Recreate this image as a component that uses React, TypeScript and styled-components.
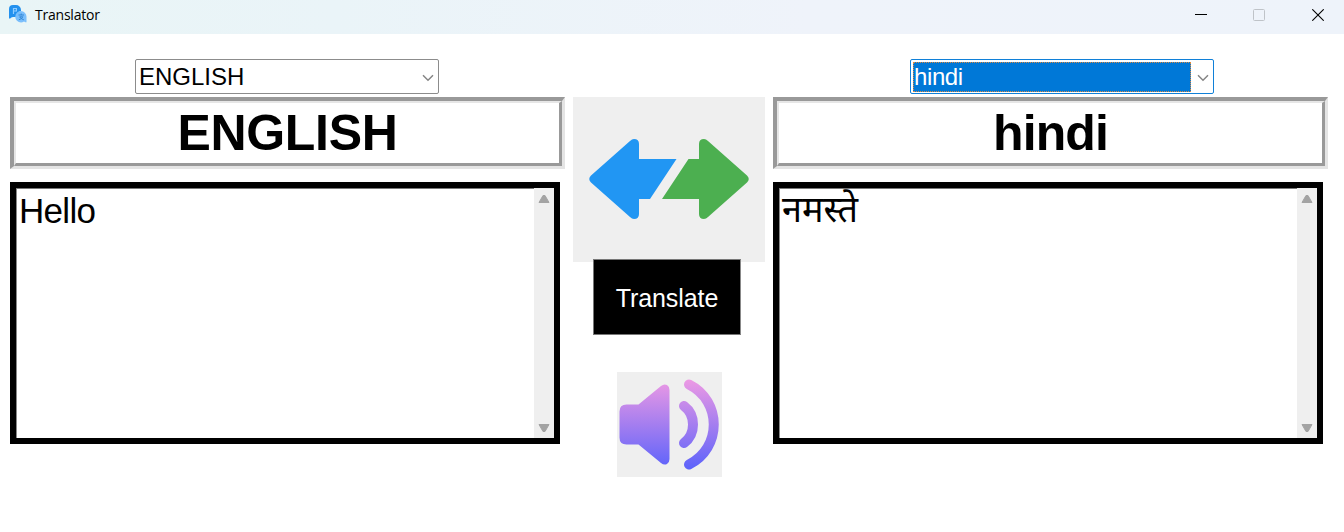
import React from "react";
import styled, { createGlobalStyle } from "styled-components";

const GlobalStyle = createGlobalStyle`
  * { box-sizing: border-box; }
  body { margin: 0; background: #fff; overflow: hidden; }
`;

const sans = `"Liberation Sans", "Noto Sans", "Noto Sans Devanagari", sans-serif`;

const Window = styled.div`
  width: 1344px;
  height: 532px;
  display: flex;
  flex-direction: column;
  background: #fff;
  color: #000;
  font-family: ${sans};
`;

const TitleBar = styled.header`
  height: 34px;
  flex: none;
  display: flex;
  align-items: center;
  background: linear-gradient(90deg, #e9f5f6 0%, #eaf4f8 25%, #eff3fa 60%, #eef3fa 100%);
  padding-left: 8px;
`;

const Title = styled.span`
  margin: -4px auto 0 7px;
  font: 14px/20px "Open Sans", sans-serif;
  letter-spacing: -0.22px;
`;

const WindowControls = styled.div`
  display: flex;
  margin: 0 -3px 4px 0;
`;

const WindowButton = styled.button`
  width: 58.5px;
  height: 30px;
  padding: 0;
  border: 0;
  background: none;
  display: grid;
  place-items: center;
`;

const Main = styled.main`
  display: grid;
  grid-template-columns: 555px 192px 555px;
  column-gap: 8px;
  padding: 25px 0 0 10px;
`;

const Panel = styled.section`
  display: flex;
  flex-direction: column;
`;

const Combo = styled.div<{ $active?: boolean; $offset: number }>`
  width: 304px;
  height: 35px;
  margin-left: ${(p) => p.$offset}px;
  display: flex;
  align-items: center;
  border: 1px solid ${(p) => (p.$active ? "#1080d8" : "#8c8c8c")};
  border-radius: 2px;
  padding: 2px 3px 2px 1.5px;
`;

const ComboValue = styled.span<{ $active?: boolean }>`
  flex: 1;
  height: 30px;
  padding-left: 1.5px;
  font-size: 24px;
  line-height: 29px;
  letter-spacing: ${(p) => (p.$active ? "-0.4px" : "0")};
  color: ${(p) => (p.$active ? "#fff" : "#000")};
  background: ${(p) => (p.$active ? "#0078d7" : "transparent")};
  outline: ${(p) => (p.$active ? "1px dotted #d98b45" : "none")};
  outline-offset: -1px;
`;

const ComboArrow = styled.svg`
  width: 12px;
  height: 8px;
  margin: 3px 1px 0 6px;
`;

const LabelOuter = styled.div`
  height: 72px;
  margin-top: 2.5px;
  border-style: solid;
  border-width: 4px 3px 3px 4px;
  border-color: #999 #e4e4e4 #e4e4e4 #999;
`;

const LabelInner = styled.div<{ $tight?: boolean }>`
  height: 100%;
  border-style: solid;
  border-width: 2px 3px 3px 2px;
  border-color: #e6e6e6 #999 #999 #e6e6e6;
  font-weight: 700;
  font-size: 50px;
  line-height: 61px;
  letter-spacing: ${(p) => (p.$tight ? "-0.9px" : "-0.3px")};
  text-align: center;
`;

const TextBox = styled.div`
  width: 550px;
  height: 262.5px;
  margin-top: 13px;
  border: 6px solid #000;
  display: flex;
`;

const TextContent = styled.div<{ $latin?: boolean }>`
  flex: 1;
  border-top: 1px solid #777;
  border-left: 1px solid #888;
  padding: ${(p) => (p.$latin ? "1px" : "0")} 0 0 2px;
  font-size: ${(p) => (p.$latin ? "35px" : "36px")};
  line-height: 41px;
  letter-spacing: ${(p) => (p.$latin ? "-0.7px" : "0")};
`;

const ScrollBar = styled.div`
  width: 20px;
  background: #efefef;
  display: flex;
  flex-direction: column;
  justify-content: space-between;
  align-items: center;
  padding: 6px 0 5px;
`;

const Actions = styled.div`
  display: flex;
  flex-direction: column;
  align-items: center;
  padding-top: 37.5px;
`;

const SwapArea = styled.div`
  width: 192px;
  height: 165px;
  flex: none;
  display: grid;
  place-items: center;
  background: #efefef;
`;

const TranslateButton = styled.button`
  width: 148px;
  height: 76px;
  flex: none;
  margin: -2.5px 4px 0 0;
  border: 1px solid #777;
  border-right-color: #888;
  background: #000;
  color: #fff;
  font-family: ${sans};
  font-size: 25px;
  letter-spacing: -0.1px;
  padding: 2px 0 0;
`;

const SpeakButton = styled.button`
  width: 105px;
  height: 105px;
  flex: none;
  margin-top: 36.5px;
  padding: 0;
  border: 0;
  background: #efefef;
`;

const Drawing = styled.svg`
  display: block;
`;

const AppMark = styled(Drawing)`
  margin-bottom: 6px;
`;

function ScrollTriangle({ down }: { down?: boolean }) {
  return (
    <Drawing width="12" height="10" viewBox="0 0 12 10">
      <path
        d={down ? "M1 1.5H11L7 8.500H5Z" : "M5 1.500H7L11 8.500H1Z"}
        fill="#a3a3a3"
        stroke="#a3a3a3"
        strokeLinejoin="round"
      />
    </Drawing>
  );
}

interface LanguagePanelProps {
  name: string;
  text: string;
  active?: boolean;
  latin?: boolean;
  offset: number;
}

function LanguagePanel({ name, text, active, latin, offset }: LanguagePanelProps) {
  return (
    <Panel>
      <Combo $active={active} $offset={offset}>
        <ComboValue $active={active}>{name}</ComboValue>
        <ComboArrow viewBox="0 0 12 8">
          <path d="M1 1.2L6 6.2L11 1.2" fill="none" stroke="#858585" strokeWidth="1.5" />
        </ComboArrow>
      </Combo>
      <LabelOuter>
        <LabelInner $tight={!latin}>{name}</LabelInner>
      </LabelOuter>
      <TextBox>
        <TextContent $latin={latin}>{text}</TextContent>
        <ScrollBar>
          <ScrollTriangle />
          <ScrollTriangle down />
        </ScrollBar>
      </TextBox>
    </Panel>
  );
}

function AppIcon() {
  return (
    <AppMark width="20" height="20" viewBox="0 0 20 20">
      <path
        d="M5 1H8A5 5 0 0 1 13 6V7Q8 8 8 13H5Q3 13 2.2 14.5H1V5A4 4 0 0 1 5 1Z"
        fill="#2491ee"
      />
      <path d="M5.500 10V4.500H8.400V7H5.500M8.400 4.500" fill="none" stroke="#8fccff" strokeWidth="1.2" />
      <path
        d="M13 7A5.8 5.8 0 0 1 18.5 12.5V18.3H17.4L16 17.4Q14.5 18.5 13 18.5A5.7 5.7 0 1 1 13 7Z"
        fill="#7bbffc"
      />
      <path
        d="M10.500 11H16M13.200 9.500V11M11.500 12.800H14.800Q14 15 10.800 15.800M11.800 13Q13 15 15.800 15.800"
        fill="none"
        stroke="#2b82d2"
        strokeWidth=".9"
      />
    </AppMark>
  );
}

export default function App() {
  return (
    <Window>
      <GlobalStyle />
      <TitleBar>
        <AppIcon />
        <Title>Translator</Title>
        <WindowControls>
          <WindowButton aria-label="Minimize">
            <Drawing width="12" height="12" viewBox="0 0 12 12">
              <path d="M0 5.5H12" stroke="#000" />
            </Drawing>
          </WindowButton>
          <WindowButton aria-label="Maximize">
            <Drawing width="12" height="12" viewBox="0 0 12 12">
              <rect x=".5" y=".5" width="11" height="11" rx="1" fill="none" stroke="#bfc3c8" />
            </Drawing>
          </WindowButton>
          <WindowButton aria-label="Close">
            <Drawing width="12" height="12" viewBox="0 0 12 12">
              <path d="M.3 .3L11.7 11.7M11.7 .3L.3 11.7" stroke="#000" strokeWidth="1.1" />
            </Drawing>
          </WindowButton>
        </WindowControls>
      </TitleBar>
      <Main>
        <LanguagePanel name="ENGLISH" text="Hello" latin offset={125} />
        <Actions>
          <SwapArea>
            <Drawing width="160" height="80" viewBox="0 0 160 80">
              <path
                d="M50 20H87.5L61 60H50V75Q50 80 45 80Q43 80 41 78L2 43.5Q-1.5 40 2 36.5L41 2Q43 0 45 0Q50 0 50 5Z"
                fill="#2196f3"
              />
              <path
                d="M110 20H99.5L73 60H110V75Q110 80 115 80Q117 80 119 78L158 43.5Q161.5 40 158 36.5L119 2Q117 0 115 0Q110 0 110 5Z"
                fill="#4caf50"
              />
            </Drawing>
          </SwapArea>
          <TranslateButton>Translate</TranslateButton>
          <SpeakButton aria-label="Speak">
            <Drawing width="105" height="105" viewBox="0 0 105 105">
              <defs>
                <linearGradient id="tone" x1="0" y1="8" x2="0" y2="98" gradientUnits="userSpaceOnUse">
                  <stop offset="0" stopColor="#ec99e4" />
                  <stop offset="1" stopColor="#5b62fb" />
                </linearGradient>
              </defs>
              <path
                d="M9.5 32.5H21.5L44 14Q47 11.5 50 13Q52.5 14.5 52.5 18V87Q52.5 90.500 50 92Q47 93.500 44 91L21.500 72.500H9.500Q2.500 72.500 2.500 65.500V39.500Q2.500 32.500 9.500 32.500Z"
                fill="url(#tone)"
              />
              <path
                d="M67 34C79 43 79 62 67 71M72 12.500C105 29 105 76 72 92.500"
                fill="none"
                stroke="url(#tone)"
                strokeWidth="10"
                strokeLinecap="round"
              />
            </Drawing>
          </SpeakButton>
        </Actions>
        <LanguagePanel name="hindi" text="नमस्ते" active offset={137} />
      </Main>
    </Window>
  );
}
